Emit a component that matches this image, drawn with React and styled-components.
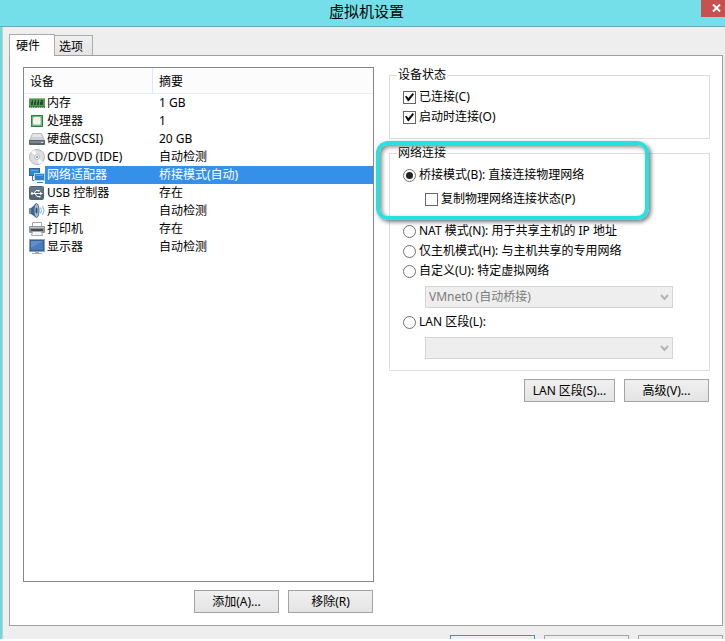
import React, { useState } from 'react';
import styled, { createGlobalStyle, css } from 'styled-components';

const MemoryIcon = () => (
  <svg width="16" height="16" viewBox="0 0 16 16">
    <rect x="0" y="3" width="16" height="10" fill="#4f9a4c" />
    <rect x="0" y="3" width="16" height="1" fill="#8cc487" />
    <path d="M2 5h2v5H2zM5 5h2v5H5zM8 5h2v5H8zM11 5h3v5h-3z" fill="#2b4a35" />
    <path d="M2 5h1v2H2zM5 5h1v2H5zM8 5h1v2H8zM11 5h1v2h-1z" fill="#5b7a66" />
    <path d="M0 11h16v1H0z" fill="#3f7d3a" />
    <path d="M1 12h1v1H1zM3 12h1v1H3zM5 12h1v1H5zM8 12h1v1H8zM10 12h1v1h-1zM12 12h1v1h-1zM14 12h1v1h-1z" fill="#c3c98a" />
  </svg>
);

const CpuIcon = () => (
  <svg width="16" height="16" viewBox="0 0 16 16">
    <rect x="2" y="2" width="12" height="12" fill="#2f7f45" />
    <rect x="3" y="3" width="10" height="10" fill="#6db87a" />
    <rect x="4" y="4" width="8" height="8" rx="2" fill="#f0f5ef" />
    <path d="M11 5h1v5l-2 2H5v-1h6z" fill="#c6d5c7" />
  </svg>
);

const DiskIcon = () => (
  <svg width="16" height="16" viewBox="0 0 16 16">
    <path d="M3.500 2.500h9l3 7h-15z" fill="#cdd1d6" stroke="#b4b9bf" />
    <path d="M4 3h8l1 3H3z" fill="#e3e6e9" />
    <rect x="0" y="9" width="16" height="5" rx="1" fill="#59636e" />
    <rect x="1" y="10" width="14" height="2" fill="#7d8792" />
    <rect x="12" y="11" width="2" height="1" fill="#c5e6c5" />
  </svg>
);

const DiscIcon = () => (
  <svg width="16" height="16" viewBox="0 0 16 16">
    <circle cx="8" cy="8" r="7.500" fill="#dcdee1" stroke="#b3b6ba" />
    <path d="M8 8L2 3a8 8 0 0 1 4-2zM8 8l6 5a8 8 0 0 1-4 2z" fill="#fafbfb" />
    <circle cx="8" cy="8" r="2.500" fill="#f3f4f6" stroke="#bcc0c6" />
    <circle cx="8" cy="8" r="1" fill="#8b9098" />
  </svg>
);

const NetworkIcon = () => (
  <svg width="16" height="16" viewBox="0 0 16 16">
    <rect x="0.500" y="1.500" width="10" height="7" fill="#3487cf" stroke="#2a679f" />
    <path d="M2 3h7v1H2z" fill="#62a9e3" />
    <path d="M3.500 9v4.500H6" fill="none" stroke="#397bb8" />
    <rect x="5.500" y="6.500" width="10" height="7" fill="#2f82cb" stroke="#b9d9f4" />
    <path d="M7 8h7v1H7z" fill="#65abe4" />
    <path d="M8 15h6v1H8z" fill="#3d79ae" />
  </svg>
);

const UsbIcon = () => (
  <svg width="16" height="16" viewBox="0 0 16 16">
    <rect x="0" y="1" width="15" height="14" rx="2" fill="#526577" />
    <path d="M1 2h13v5H1z" fill="#63778a" />
    <path d="M3 8.500h9M5 8.500l2-3h2M6 8.500l2 3h2" fill="none" stroke="#fff" />
    <circle cx="3" cy="8.500" r="1.300" fill="#fff" />
    <path d="M11 7l3 1.500-3 1.500zM9 5h1.500v1.500H9zM10 11h1.500v1.500H10z" fill="#fff" />
  </svg>
);

const SoundIcon = () => (
  <svg width="16" height="16" viewBox="0 0 16 16">
    <path d="M0 5h3v6H0z" fill="#6f8fb0" />
    <path d="M2 5l5-4.500v14L2 11z" fill="#3f6690" />
    <ellipse cx="7.500" cy="7.500" rx="2.500" ry="7" fill="#9fbddb" stroke="#45688b" />
    <ellipse cx="7.500" cy="7.500" rx="1" ry="3" fill="#2f4f74" />
    <path d="M11.500 4.500q2 3 0 6M13.500 3q3 4.500 0 9" fill="none" stroke="#7cb4e2" />
  </svg>
);

const PrinterIcon = () => (
  <svg width="16" height="16" viewBox="0 0 16 16">
    <path d="M3.500 5V1.500h9V5" fill="#fff" stroke="#a4a8ac" />
    <rect x="0" y="5" width="16" height="7" rx="1" fill="#8d9399" />
    <path d="M1 6h14v1H1z" fill="#c3c7ca" />
    <path d="M2 8h12v2H2z" fill="#464b51" />
    <path d="M3.500 10.500h9l1 4h-11z" fill="#f5f6f7" stroke="#a4a8ac" />
  </svg>
);

const DisplayIcon = () => (
  <svg width="16" height="16" viewBox="0 0 16 16">
    <rect x="0" y="0" width="16" height="13" fill="#8fa3b8" />
    <rect x="1" y="1" width="14" height="11" fill="#35608f" />
    <rect x="2" y="2" width="12" height="9" fill="#4a7cb5" />
    <path d="M2 2h12L2 9z" fill="#5f91c8" />
    <path d="M6 13h4v1H6zM3 14h10v1H3z" fill="#a3adb7" />
  </svg>
);

const devices = [
  { name: '内存', summary: '1 GB', Icon: MemoryIcon },
  { name: '处理器', summary: '1', Icon: CpuIcon },
  { name: '硬盘(SCSI)', summary: '20 GB', Icon: DiskIcon },
  { name: 'CD/DVD (IDE)', summary: '自动检测', Icon: DiscIcon },
  { name: '网络适配器', summary: '桥接模式(自动)', Icon: NetworkIcon },
  { name: 'USB 控制器', summary: '存在', Icon: UsbIcon },
  { name: '声卡', summary: '自动检测', Icon: SoundIcon },
  { name: '打印机', summary: '存在', Icon: PrinterIcon },
  { name: '显示器', summary: '自动检测', Icon: DisplayIcon },
];

function DeviceTable({ selected, onSelect }) {
  return (
    <Table>
      <thead>
        <tr>
          <HeadCell $first>设备</HeadCell>
          <HeadCell>摘要</HeadCell>
        </tr>
      </thead>
      <tbody>
        {devices.map(({ name, summary, Icon }, index) => (
          <tr key={name} aria-selected={index === selected} onClick={() => onSelect(index)}>
            <NameCell>
              <DeviceName>
                <Icon />
                <DeviceLabel $selected={index === selected}>{name}</DeviceLabel>
              </DeviceName>
            </NameCell>
            <SummaryCell $selected={index === selected}>{summary}</SummaryCell>
          </tr>
        ))}
      </tbody>
    </Table>
  );
}

function ModeOption({ value, mode, setMode, children }) {
  return (
    <Option>
      <Radio name="mode" value={value} checked={mode === value} onChange={() => setMode(value)} />
      {children}
    </Option>
  );
}

function Dropdown({ label, disabled, children }) {
  return (
    <SelectWrap>
      <Select aria-label={label} disabled={disabled}>{children}</Select>
      <Arrow width="9" height="7" viewBox="0 0 9 7">
        <path d="M1 1l3.500 4L8 1" fill="none" stroke="currentColor" strokeWidth="2" />
      </Arrow>
    </SelectWrap>
  );
}

function App() {
  const [selected, setSelected] = useState(4);
  const [connected, setConnected] = useState(true);
  const [connectAtStart, setConnectAtStart] = useState(true);
  const [replicate, setReplicate] = useState(false);
  const [mode, setMode] = useState('bridged');

  return (
    <Dialog>
      <GlobalStyle />
      <TitleBar>
        <Title>虚拟机设置</Title>
        <CloseButton aria-label="关闭">
          <svg width="9" height="8" viewBox="0 0 9 8">
            <path d="M1 0.500l7 7M8 0.500l-7 7" stroke="#fff" strokeWidth="2" />
          </svg>
        </CloseButton>
      </TitleBar>
      <Body>
        <Tabs role="tablist">
          <Tab role="tab" aria-selected="true" $active>硬件</Tab>
          <Tab role="tab" aria-selected="false">选项</Tab>
        </Tabs>
        <Page role="tabpanel">
          <Column>
            <DeviceList>
              <DeviceTable selected={selected} onSelect={setSelected} />
            </DeviceList>
            <Actions>
              <Button>添加(A)...</Button>
              <Button>移除(R)</Button>
            </Actions>
          </Column>
          <Column>
            <Group>
              <legend>设备状态</legend>
              <Option>
                <Checkbox checked={connected} onChange={() => setConnected(!connected)} />
                已连接(C)
              </Option>
              <Option>
                <Checkbox checked={connectAtStart} onChange={() => setConnectAtStart(!connectAtStart)} />
                启动时连接(O)
              </Option>
            </Group>
            <NetworkSection>
              <Group $compact>
                <legend>网络连接</legend>
                <Bridged>
                  <ModeOption value="bridged" mode={mode} setMode={setMode}>桥接模式(B): 直接连接物理网络</ModeOption>
                  <Indent>
                    <Option>
                      <Checkbox checked={replicate} onChange={() => setReplicate(!replicate)} />
                      复制物理网络连接状态(P)
                    </Option>
                  </Indent>
                </Bridged>
                <ModeOption value="nat" mode={mode} setMode={setMode}>NAT 模式(N): 用于共享主机的 IP 地址</ModeOption>
                <ModeOption value="host" mode={mode} setMode={setMode}>仅主机模式(H): 与主机共享的专用网络</ModeOption>
                <ModeOption value="custom" mode={mode} setMode={setMode}>自定义(U): 特定虚拟网络</ModeOption>
                <Indent>
                  <Dropdown label="虚拟网络" disabled={mode !== 'custom'}>
                    <option>VMnet0 (自动桥接)</option>
                  </Dropdown>
                </Indent>
                <ModeOption value="lan" mode={mode} setMode={setMode}>LAN 区段(L):</ModeOption>
                <Indent>
                  <Dropdown label="LAN 区段" disabled={mode !== 'lan'} />
                </Indent>
              </Group>
              <Highlight />
            </NetworkSection>
            <Actions>
              <Button $wide>LAN 区段(S)...</Button>
              <Button>高级(V)...</Button>
            </Actions>
          </Column>
        </Page>
        <Footer>
          <Button aria-label="确定" $primary />
          <Button aria-label="取消" />
          <Button aria-label="帮助" />
        </Footer>
      </Body>
    </Dialog>
  );
}

export default App;

const GlobalStyle = createGlobalStyle`
  * {
    box-sizing: border-box;
  }
  body {
    margin: 0;
    background: #fff;
  }
  body, button, input, select {
    font-family: "Noto Sans", "Noto Sans CJK SC", sans-serif;
    font-size: 12px;
    line-height: 16px;
    color: #000;
  }
`;

const Dialog = styled.div`
  display: flex;
  flex-direction: column;
  height: 100vh;
  border-bottom: 2px solid #fff;
  overflow: hidden;
`;

const TitleBar = styled.header`
  display: flex;
  flex: none;
  height: 27px;
  padding-left: 32px;
  background: #74dfe8;
  border-bottom: 1px solid #68abb5;
`;

const Title = styled.h1`
  flex: 1;
  margin: 0;
  font-size: 15px;
  font-weight: 400;
  line-height: 22px;
  text-align: center;
`;

const CloseButton = styled.button`
  display: flex;
  align-items: center;
  justify-content: flex-end;
  width: 24px;
  height: 17px;
  padding: 0 4px 2px 0;
  border: 0;
  background: #c75050;
`;

const Body = styled.main`
  flex: 1;
  min-height: 0;
  display: flex;
  flex-direction: column;
  padding: 7px 2px 0 6px;
  background: #eee;
  border-left: 2px solid #74d6dd;
  box-shadow: inset 1px 0 #b9d3d5;
`;

const Tabs = styled.div`
  display: flex;
  align-items: flex-end;
  padding-left: 1px;
`;

const Tab = styled.button`
  width: 38px;
  height: 20px;
  padding: 2px 0 0 4px;
  border: 1px solid #acacac;
  border-left: 0;
  border-bottom: 0;
  background: linear-gradient(#f0f0f0, #e4e4e4);
  text-align: left;
  ${({ $active }) => $active && css`
    z-index: 1;
    width: 46px;
    height: 22px;
    margin-bottom: -1px;
    padding: 0 0 0 6px;
    border-left: 1px solid #acacac;
    background: #fff;
  `}
`;

const Page = styled.section`
  flex: 1;
  min-height: 0;
  display: grid;
  grid-template-columns: 351fr 321fr;
  gap: 15px;
  margin-left: 1px;
  padding: 11px 12px 12px 13px;
  background: #fff;
  border: 1px solid #a0a0a0;
`;

const Column = styled.div`
  display: flex;
  flex-direction: column;
  min-width: 0;
`;

const DeviceList = styled.div`
  flex: 1;
  border: 1px solid #828790;
`;

const Table = styled.table`
  width: 100%;
  table-layout: fixed;
  border-spacing: 0;
  td, th {
    padding: 0;
    font-weight: 400;
    text-align: left;
    white-space: nowrap;
  }
`;

const HeadCell = styled.th`
  height: 26px;
  background: #fcfcfc;
  border-bottom: 1px solid #e8eef4;
  && {
    padding: 3px 0 0 6px;
  }
  ${({ $first }) => $first && css`
    width: 129px;
    border-right: 1px solid #dfe8f0;
  `}
`;

const selectedRow = css`
  background: #3590ea;
  color: #fff;
`;

const NameCell = styled.td`
  height: 18px;
`;

const DeviceName = styled.div`
  display: flex;
  align-items: center;
  height: 18px;
  padding-left: 5px;
  svg {
    flex: none;
  }
`;

const DeviceLabel = styled.span`
  flex: 1;
  padding-left: 2px;
  line-height: 18px;
  ${({ $selected }) => $selected && selectedRow}
`;

const SummaryCell = styled.td`
  && {
    padding-left: 6px;
  }
  line-height: 18px;
  ${({ $selected }) => $selected && selectedRow}
`;

const Actions = styled.div`
  display: flex;
  justify-content: flex-end;
  gap: 9px;
  margin-top: 8px;
  padding-right: 1px;
`;

const Button = styled.button`
  width: ${({ $wide }) => ($wide ? '91px' : '85px')};
  height: 23px;
  padding: 0;
  border: 1px solid ${({ $primary }) => ($primary ? '#3c8fdd' : '#a3a3a3')};
  background: linear-gradient(#f0f0f0, #e4e4e4);
  white-space: nowrap;
`;

const Group = styled.fieldset`
  min-width: 0;
  margin: 0;
  padding: 4px 13px ${({ $compact }) => ($compact ? '7px' : '11px')};
  border: 1px solid #dcdcdc;
  legend {
    margin-left: -6px;
    padding: 0 1px;
  }
`;

const NetworkSection = styled.div`
  position: relative;
  margin-top: 6px;
`;

const Highlight = styled.div`
  position: absolute;
  top: -4px;
  left: -13px;
  right: 61px;
  height: 79px;
  border: 4px solid #2adfdc;
  border-radius: 12px;
  box-shadow: 2px 2px 4px #777, inset 2px 2px 4px #888;
  pointer-events: none;
`;

const Option = styled.label`
  display: flex;
  align-items: center;
  gap: 3px;
  height: 20px;
  white-space: nowrap;
`;

const Bridged = styled.div`
  display: flex;
  flex-direction: column;
  gap: 4px;
  margin-bottom: 12px;
`;

const Indent = styled.div`
  padding-left: 22px;
`;

const Checkbox = styled.input.attrs({ type: 'checkbox' })`
  appearance: none;
  flex: none;
  display: grid;
  place-items: center;
  width: 13px;
  height: 13px;
  margin: 0;
  border: 1px solid #666;
  background: #fff;
  &:checked::after {
    content: '';
    width: 9px;
    height: 9px;
    background: #111;
    clip-path: polygon(0 45%, 15% 35%, 38% 60%, 85% 5%, 100% 20%, 42% 98%, 32% 98%);
  }
`;

const Radio = styled.input.attrs({ type: 'radio' })`
  appearance: none;
  flex: none;
  display: grid;
  place-items: center;
  width: 13px;
  height: 13px;
  margin: 0;
  border: 1px solid #707070;
  border-radius: 50%;
  background: #fff;
  &:checked::after {
    content: '';
    width: 7px;
    height: 7px;
    border-radius: 50%;
    background: #222;
  }
`;

const SelectWrap = styled.div`
  position: relative;
  margin: 5px 23px 4px 0;
`;

const Select = styled.select`
  appearance: none;
  display: block;
  width: 100%;
  height: 22px;
  padding: 0 3px;
  border: 1px solid #d4d4d4;
  border-radius: 0;
  background: #eee;
  &:disabled {
    color: #7b7b7b;
    opacity: 1;
  }
`;

const Arrow = styled.svg`
  position: absolute;
  top: 8px;
  right: 4px;
  color: #b4b4b4;
  pointer-events: none;
`;

const Footer = styled.footer`
  flex: none;
  display: flex;
  justify-content: flex-end;
  gap: 9px;
  height: 13px;
  padding-top: 9px;
`;
